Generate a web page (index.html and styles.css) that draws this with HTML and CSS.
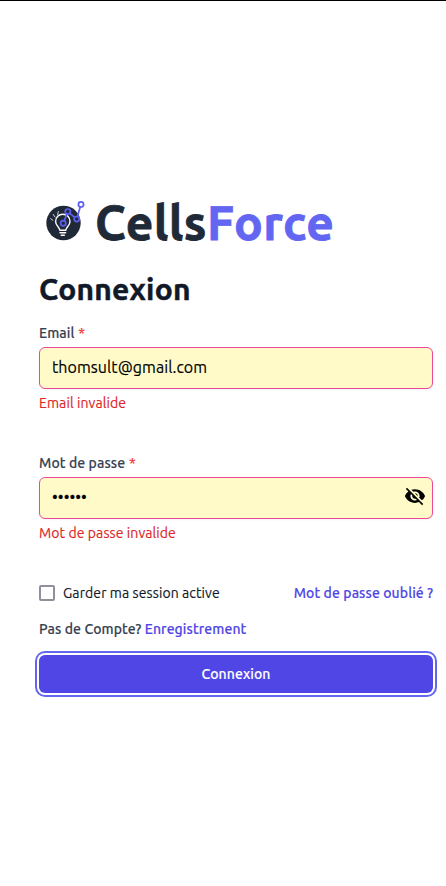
FILE: index.html
```html
<!DOCTYPE html>
<html lang="fr">
<head>
<meta charset="utf-8">
<title>CellsForce</title>
<link rel="stylesheet" href="styles.css">
</head>
<body>
<main class="page">
  <div class="brand">
    <svg class="logo" viewBox="0 0 49 49" fill="none" stroke-linecap="round" stroke-linejoin="round">
      <circle cx="24.5" cy="27" r="17.2" fill="#1f2937"/>
      <g stroke="#fff">
        <path d="M20.8 34.3c0-3-4.2-4.4-4.2-8.9a7.2 7.2 0 0 1 14.4 0c0 4.5-4.2 5.9-4.2 8.9z" stroke-width="1.4"/>
        <path d="M21 36.8h5.6M22.3 39.3h3" stroke-width="1.5"/>
        <path d="M11.7 22.7l2.2 1.6M14.2 18.4l1.8 2.6M19.3 15.6l-.7 3.2" stroke-width=".8"/>
      </g>
      <g stroke="#5b5ef0" stroke-width="1.7">
        <circle cx="24.2" cy="27.3" r="2.6"/>
        <circle cx="28.8" cy="15.6" r="2.6"/>
        <circle cx="37.7" cy="23.1" r="2.6"/>
        <circle cx="42" cy="8.4" r="2.6"/>
        <path d="M25.2 24.7l2.6-6.6M30.8 17.3l4.8 4.1M38.4 20.4l2.8-9.3"/>
      </g>
    </svg>
    <div class="wordmark"><span class="cells">Cells</span><span class="force">Force</span></div>
  </div>
  <h1>Connexion</h1>
  <form>
    <div class="field">
      <label for="email">Email <span class="required">*</span></label>
      <input id="email" type="email" value="thomsult@gmail.com">
      <p class="error">Email invalide</p>
    </div>
    <div class="field">
      <label for="password">Mot de passe <span class="required">*</span></label>
      <div class="password">
        <input id="password" type="password" value="secret">
        <svg class="eye" viewBox="0 0 24 24"><path d="M12 7c2.76 0 5 2.24 5 5 0 .65-.13 1.26-.36 1.83l2.92 2.92c1.51-1.26 2.7-2.89 3.43-4.75-1.73-4.39-6-7.5-11-7.5-1.4 0-2.74.25-3.98.7l2.16 2.16C10.74 7.13 11.35 7 12 7zM2 4.27l2.28 2.28.46.46C3.08 8.3 1.78 10.02 1 12c1.73 4.39 6 7.5 11 7.5 1.55 0 3.03-.3 4.38-.84l.42.42L19.73 22 21 20.73 3.27 3 2 4.27zM7.53 9.8l1.55 1.55c-.05.21-.08.43-.08.65 0 1.66 1.34 3 3 3 .22 0 .44-.03.65-.08l1.55 1.55c-.67.33-1.41.53-2.2.53-2.76 0-5-2.24-5-5 0-.79.2-1.53.53-2.2zm4.31-.78l3.15 3.15.02-.16c0-1.66-1.34-3-3-3l-.17.01z"/></svg>
      </div>
      <p class="error">Mot de passe invalide</p>
    </div>
    <div class="options">
      <label class="remember"><input type="checkbox"><span>Garder ma session active</span></label>
      <a class="forgot">Mot de passe oublié ?</a>
    </div>
    <p class="signup">Pas de Compte? <a>Enregistrement</a></p>
    <button type="button">Connexion</button>
  </form>
</main>
</body>
</html>
```
FILE: styles.css
```css
* { box-sizing: border-box; }
body {
  margin: 0;
  background: #fff;
  color: #111827;
  font: 14px/20px Ubuntu, "Noto Sans", sans-serif;
  letter-spacing: .09px;
  -webkit-text-stroke: .15px;
}
.page {
  min-height: 886px;
  border-top: 1px solid #000;
  padding: 196px 13px 0 39px;
}
h1, p { margin: 0; }
.brand { display: flex; align-items: center; height: 50px; white-space: nowrap; }
.logo { width: 49px; height: 49px; flex: none; margin-bottom: 3px; }
.wordmark {
  display: flex;
  margin-left: 7px;
  font-size: 48px;
  line-height: 48px;
  font-weight: 700;
  letter-spacing: .45px;
  -webkit-text-stroke: .8px;
}
.cells { color: #1f2937; }
.force { color: #6366f1; }
h1 {
  margin-top: 24px;
  font-size: 30px;
  line-height: 36px;
  font-weight: 700;
  letter-spacing: .25px;
  -webkit-text-stroke: .5px;
}
form { margin-top: 16px; }
.field { height: 130px; }
.field label { display: block; color: #374151; font-weight: 500; }
.required { margin-left: .5px; color: #ef4444; }
.field input {
  display: block;
  width: 100%;
  height: 42px;
  margin: 4px 0;
  padding: 7px 12px 9px;
  border: 1px solid #ec4899;
  border-radius: 6px;
  outline: 0;
  background: #fffac8;
  color: #000;
  font: 16px/24px Ubuntu, "Noto Sans", sans-serif;
  letter-spacing: .06px;
  box-shadow: 0 1px 2px rgba(0, 0, 0, .05);
}
.password { position: relative; }
.eye { position: absolute; top: 8px; right: 7px; width: 22px; height: 22px; }
.error { color: #dc2626; }
.options { display: flex; justify-content: space-between; align-items: center; height: 20px; white-space: nowrap; }
.remember { display: flex; align-items: center; gap: 8px; }
.remember input {
  appearance: none;
  width: 16px;
  height: 16px;
  margin: 0;
  border: 2px solid #8f8f9d;
  border-radius: 2px;
}
a { color: #4f46e5; font-weight: 500; }
.signup { margin-top: 16px; color: #374151; font-weight: 500; }
button {
  display: block;
  width: 100%;
  height: 38px;
  margin-top: 16px;
  border: 0;
  border-radius: 6px;
  background: #4f46e5;
  color: #fff;
  font: 500 14px/20px Ubuntu, "Noto Sans", sans-serif;
  letter-spacing: .09px;
  box-shadow: 0 0 0 2px #fff, 0 0 0 4px #6366f1;
}
```
